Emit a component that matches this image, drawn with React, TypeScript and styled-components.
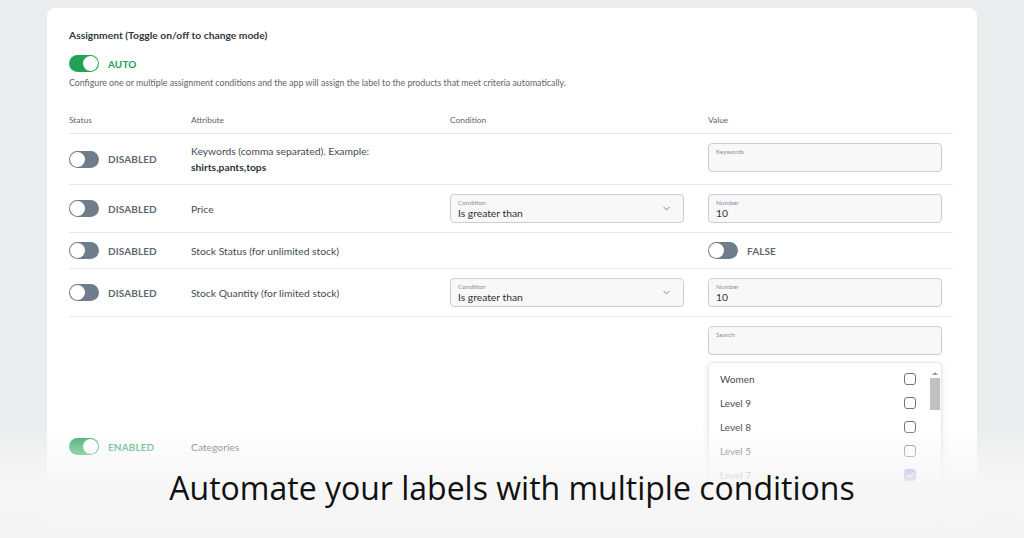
import React from "react";
import styled, { createGlobalStyle } from "styled-components";
import { ChevronDown, Check } from "lucide-react";

const GlobalStyle = createGlobalStyle`
  html, body {
    margin: 0;
    padding: 0;
    height: 538px;
    overflow: hidden;
    background: #ebeced;
  }
  * { box-sizing: border-box; }
`;

const Page = styled.div`
  position: relative;
  height: 538px;
  overflow: hidden;
  background: #ebeced;
  padding: 8px 47px 0 47px;
  font-family: Lato, "Open Sans", sans-serif;
  color: #3d4248;
`;

const Card = styled.div`
  background: #ffffff;
  border-radius: 8px;
  padding: 21px 24px 0 22px;
`;

const Title = styled.div`
  font-size: 10.3px;
  font-weight: 700;
  line-height: 12px;
  color: #33383e;
`;

const ModeRow = styled.div`
  display: flex;
  align-items: center;
  gap: 9px;
  margin-top: 14px;
`;

const Track = styled.div<{ $on?: boolean }>`
  position: relative;
  width: 30px;
  height: 17px;
  border-radius: 9px;
  background: ${(p) => (p.$on ? "#22a353" : "#6f7c8a")};
  flex-shrink: 0;
`;

const Knob = styled.div<{ $on?: boolean }>`
  position: absolute;
  top: 1px;
  left: ${(p) => (p.$on ? "14px" : "1px")};
  width: 15px;
  height: 15px;
  border-radius: 50%;
  background: #ffffff;
`;

const ModeText = styled.span<{ $on?: boolean }>`
  font-size: 10px;
  font-weight: 700;
  letter-spacing: 0.1px;
  color: ${(p) => (p.$on ? "#25a157" : "#5d6874")};
`;

const Description = styled.div`
  margin-top: 6px;
  font-size: 8.8px;
  line-height: 10px;
  color: #5f646a;
`;

const Grid = styled.div`
  margin-top: 20px;
  display: grid;
  grid-template-columns: 122px 259px 258px 245px;
`;

const HeadCell = styled.div`
  font-size: 8.4px;
  color: #5f656b;
  height: 26px;
  display: flex;
  align-items: center;
  padding-bottom: 2px;
  border-bottom: 1px solid #e5e7ea;
`;

const Row = styled.div`
  display: contents;
`;

const Cell = styled.div<{ $last?: boolean }>`
  display: flex;
  align-items: center;
  gap: 9px;
  padding: 9px 0;
  border-bottom: ${(p) => (p.$last ? "none" : "1px solid #e5e7ea")};
`;

const ValueCell = styled(Cell)`
  flex-direction: column;
  align-items: stretch;
  gap: 7px;
  padding-right: 11px;
`;

const AttrText = styled.div`
  font-size: 10.3px;
  line-height: 16px;
  color: #454a50;
`;

const Strong = styled.div`
  font-weight: 700;
  color: #2e3237;
`;

const Field = styled.div`
  position: relative;
  width: 234px;
  height: 29px;
  border: 1px solid #c9ced4;
  border-radius: 4px;
  background: #f8f8f9;
  padding: 4px 7px 0 7px;
`;

const FieldLabel = styled.div`
  font-size: 6.4px;
  line-height: 8px;
  color: #8a8f95;
`;

const FieldValue = styled.div`
  font-size: 10.3px;
  line-height: 12px;
  color: #2d3136;
`;

const Chevron = styled.div`
  position: absolute;
  right: 11px;
  top: 8px;
  display: flex;
  color: #6b7580;
`;

const List = styled.div`
  width: 234px;
  height: 205px;
  display: flex;
  border: 1px solid #e6e8eb;
  border-radius: 4px;
  background: #ffffff;
  box-shadow: 0 2px 6px rgba(0, 0, 0, 0.1);
  overflow: hidden;
`;

const Items = styled.div`
  flex: 1;
  padding: 4px 12px 0 11px;
`;

const Item = styled.div`
  height: 24px;
  display: flex;
  align-items: center;
  justify-content: space-between;
  font-size: 10px;
  color: #464b51;
`;

const Box = styled.div<{ $checked?: boolean }>`
  width: 12px;
  height: 12px;
  border-radius: 3px;
  border: 1.4px solid ${(p) => (p.$checked ? "#5b67c9" : "#6c7784")};
  background: ${(p) => (p.$checked ? "#5b67c9" : "#fff")};
  display: flex;
  align-items: center;
  justify-content: center;
  color: #fff;
`;

const Scrollbar = styled.div`
  width: 13px;
  padding: 9px 1px 0 1px;
  display: flex;
  flex-direction: column;
  align-items: center;
  gap: 3px;
`;

const Arrow = styled.div`
  width: 0;
  height: 0;
  border-left: 3px solid transparent;
  border-right: 3px solid transparent;
  border-bottom: 3px solid #9a9a9a;
`;

const Thumb = styled.div`
  width: 10px;
  height: 32px;
  background: #c1c1c1;
`;

const Fade = styled.div`
  position: absolute;
  left: 0;
  right: 0;
  bottom: 0;
  height: 112px;
  display: flex;
  align-items: center;
  justify-content: center;
  padding-top: 10px;
  background: linear-gradient(
    to bottom,
    rgba(247, 247, 247, 0) 0%,
    rgba(247, 247, 247, 0.45) 20%,
    rgba(247, 247, 247, 0.8) 42%,
    rgba(246, 246, 246, 0.97) 58%,
    #f5f5f5 100%
  );
`;

const Caption = styled.div`
  font-family: "Open Sans", sans-serif;
  font-size: 32px;
  color: #111111;
`;

function Toggle({ on }: { on?: boolean }) {
  return (
    <Track $on={on}>
      <Knob $on={on} />
    </Track>
  );
}

function Status({ on }: { on?: boolean }) {
  return (
    <>
      <Toggle on={on} />
      <ModeText $on={on}>{on ? "ENABLED" : "DISABLED"}</ModeText>
    </>
  );
}

function ConditionSelect() {
  return (
    <Field>
      <FieldLabel>Condition</FieldLabel>
      <FieldValue>Is greater than</FieldValue>
      <Chevron>
        <ChevronDown size={11} strokeWidth={2} />
      </Chevron>
    </Field>
  );
}

function NumberField() {
  return (
    <Field>
      <FieldLabel>Number</FieldLabel>
      <FieldValue>10</FieldValue>
    </Field>
  );
}

const categories = [
  { name: "Women" },
  { name: "Level 9" },
  { name: "Level 8" },
  { name: "Level 5" },
  { name: "Level 7", checked: true },
];

export default function App() {
  return (
    <>
      <GlobalStyle />
      <Page>
        <Card>
          <Title>Assignment (Toggle on/off to change mode)</Title>
          <ModeRow>
            <Toggle on />
            <ModeText $on>AUTO</ModeText>
          </ModeRow>
          <Description>
            Configure one or multiple assignment conditions and the app will assign the label to the products that meet criteria automatically.
          </Description>

          <Grid>
            <HeadCell>Status</HeadCell>
            <HeadCell>Attribute</HeadCell>
            <HeadCell>Condition</HeadCell>
            <HeadCell>Value</HeadCell>

            <Row>
              <Cell>
                <Status />
              </Cell>
              <Cell>
                <AttrText>
                  Keywords (comma separated). Example:
                  <Strong>shirts,pants,tops</Strong>
                </AttrText>
              </Cell>
              <Cell />
              <ValueCell>
                <Field>
                  <FieldLabel>Keywords</FieldLabel>
                </Field>
              </ValueCell>
            </Row>

            <Row>
              <Cell>
                <Status />
              </Cell>
              <Cell>
                <AttrText>Price</AttrText>
              </Cell>
              <Cell>
                <ConditionSelect />
              </Cell>
              <ValueCell>
                <NumberField />
              </ValueCell>
            </Row>

            <Row>
              <Cell>
                <Status />
              </Cell>
              <Cell>
                <AttrText>Stock Status (for unlimited stock)</AttrText>
              </Cell>
              <Cell />
              <Cell>
                <Toggle />
                <ModeText>FALSE</ModeText>
              </Cell>
            </Row>

            <Row>
              <Cell>
                <Status />
              </Cell>
              <Cell>
                <AttrText>Stock Quantity (for limited stock)</AttrText>
              </Cell>
              <Cell>
                <ConditionSelect />
              </Cell>
              <ValueCell>
                <NumberField />
              </ValueCell>
            </Row>

            <Row>
              <Cell $last>
                <Status on />
              </Cell>
              <Cell $last>
                <AttrText>Categories</AttrText>
              </Cell>
              <Cell $last />
              <ValueCell $last>
                <Field>
                  <FieldLabel>Search</FieldLabel>
                </Field>
                <List>
                  <Items>
                    {categories.map((c) => (
                      <Item key={c.name}>
                        {c.name}
                        <Box $checked={c.checked}>
                          {c.checked && <Check size={9} strokeWidth={3} />}
                        </Box>
                      </Item>
                    ))}
                  </Items>
                  <Scrollbar>
                    <Arrow />
                    <Thumb />
                  </Scrollbar>
                </List>
              </ValueCell>
            </Row>
          </Grid>
        </Card>

        <Fade>
          <Caption>Automate your labels with multiple conditions</Caption>
        </Fade>
      </Page>
    </>
  );
}
